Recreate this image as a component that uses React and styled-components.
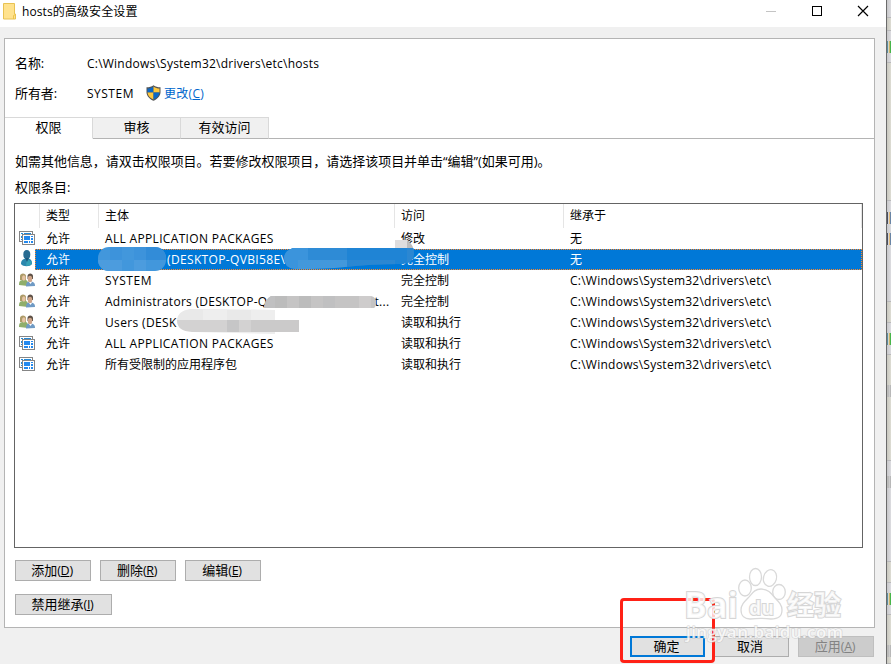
import styled, { createGlobalStyle, css } from "styled-components";

const GlobalStyle = createGlobalStyle`
  * {
    box-sizing: border-box;
  }

  body {
    margin: 0;
    overflow: hidden;
    background: #dbdad2;
    color: #000;
    font-family: "Open Sans", "Noto Sans CJK SC", sans-serif;
    font-size: 12px;
  }
`;

const Screen = styled.div`
  display: flex;
  width: 891px;
  height: 664px;
  overflow: hidden;
`;

// Dialog window
const Dialog = styled.div`
  position: relative;
  flex: none;
  display: flex;
  flex-direction: column;
  width: 887px;
  height: 664px;
  background: #f0f0f0;
  border-right: 1px solid #6b6b6b;
`;

const TitleBar = styled.header`
  display: flex;
  align-items: center;
  height: 27px;
  padding: 0 17px 5px 3px;
  background: #fff;
`;

const TitleText = styled.h1`
  flex: 1;
  margin: 1px 0 0 6px;
  font-size: 12px;
  font-weight: 400;
  line-height: 22px;
  letter-spacing: 0.1px;
`;

const WindowControls = styled.div`
  display: flex;
  gap: 34px;
`;

const Panel = styled.section`
  display: flex;
  flex-direction: column;
  width: 871px;
  height: 590px;
  margin: 11px 0 0 4px;
  background: #fff;
  border: 1px solid #b4b4b4;
`;

const Text = styled.span`
  white-space: pre;
  letter-spacing: ${({ $track }) => $track || 0}px;
`;

const Info = styled.dl`
  display: grid;
  grid-template-columns: 72px 1fr;
  grid-auto-rows: 30px;
  align-items: center;
  height: 78px;
  margin: 0;
  padding: 9px 0 0 10px;
`;

const Label = styled.dt`
  padding-bottom: 2px;
  font-size: 13px;
  letter-spacing: -0.1px;
`;

const Value = styled.dd`
  display: flex;
  align-items: center;
  margin: 0;
`;

const ChangeLink = styled.a`
  margin-left: 3px;
  color: #0066cc;
  letter-spacing: 0.3px;
`;

// Tabs
const TabBar = styled.nav`
  display: flex;
  height: 22px;
`;

const Tab = styled.div`
  display: flex;
  align-items: center;
  justify-content: center;
  width: 88px;
  padding-bottom: 3px;
  font-size: 13px;
  background: ${({ $active }) => ($active ? "#fff" : "#f0f0f0")};
  border: 1px solid #d9d9d9;
  border-left: 0;
  border-bottom-color: ${({ $active }) => ($active ? "#fff" : "#b4b4b4")};
`;

const TabFill = styled.div`
  flex: 1;
  border-bottom: 1px solid #b4b4b4;
`;

const Intro = styled.div`
  padding: 9px 0 1px 10px;
  font-size: 13px;
  line-height: 26px;
  letter-spacing: -0.03px;

  p {
    margin: 0;
  }
`;

// Permission entries
const Table = styled.div`
  position: relative;
  flex: none;
  width: 849px;
  height: 345px;
  margin: 2px 0 0 9px;
  border: 1px solid #646464;
`;

const columns = css`
  display: grid;
  grid-template-columns: 25px 59px 296px 169px 1fr;
`;

const HeadRow = styled.div`
  ${columns}
  height: 24px;
`;

const HeadCell = styled.div`
  padding-left: 6px;
  line-height: 23px;
  border-right: 1px solid #e5e5e5;
`;

const Row = styled.div`
  ${columns}
  position: relative;
  height: 21px;
  color: ${({ $selected }) => ($selected ? "#fff" : "#000")};
  background: ${({ $selected }) =>
    $selected ? "linear-gradient(90deg, #fff 20px, #0078d7 20px)" : "none"};

  ${({ $selected }) =>
    $selected &&
    css`
      &::after {
        content: "";
        position: absolute;
        inset: 0 0 0 20px;
        border: 1px dotted #ff8728;
      }
    `}
`;

const Cell = styled.div`
  padding-left: 6px;
  line-height: 22px;
  height: 21px;
  white-space: pre;
  letter-spacing: ${({ $track }) => $track || 0}px;
`;

const IconCell = styled.div`
  padding: ${({ $top }) => $top}px 0 0 4px;
  line-height: 0;
`;

const Gap = styled.span`
  display: inline-block;
  width: ${({ $width }) => $width}px;
`;

const SmudgeLayer = styled.svg`
  position: absolute;
  left: -1px;
  top: -1px;
`;

// Buttons
const ButtonRow = styled.div`
  display: flex;
  gap: 9px;
  padding: ${({ $top }) => $top}px 0 0 10px;
`;

const Button = styled.button`
  width: ${({ $width }) => $width || 76}px;
  height: 21px;
  padding: 0 2px 1px 0;
  color: ${({ disabled }) => (disabled ? "#838383" : "#000")};
  background: ${({ disabled }) => (disabled ? "#ccc" : "#e1e1e1")};
  border: 1px solid ${({ disabled }) => (disabled ? "#bfbfbf" : "#adadad")};
  font-family: inherit;
  font-size: 13px;
  line-height: 17px;

  ${({ $primary }) =>
    $primary &&
    css`
      width: 75px;
      margin-right: -1px;
      border: 2px solid #0078d7;
      line-height: 15px;
    `}

  small {
    font-size: 12.5px;
    letter-spacing: -0.3px;
  }
`;

const Footer = styled.footer`
  display: flex;
  justify-content: flex-end;
  gap: 9px;
  padding: 8px 12px 0 0;
`;

const Highlight = styled.div`
  position: absolute;
  left: 620px;
  top: 598px;
  width: 95px;
  height: 65px;
  border: 3px solid #ff2116;
  border-radius: 4px;
`;

const WatermarkLayer = styled.svg`
  position: absolute;
  left: 675px;
  top: 562px;
  font-family: "Open Sans", "Noto Sans CJK SC", sans-serif;
`;

// Page visible behind the dialog
const Behind = styled.div`
  flex: none;
  display: flex;
  flex-direction: column;
  width: 4px;
`;

const Band = styled.div`
  flex: none;
  height: ${({ $height }) => $height}px;
  overflow: hidden;
  padding-top: ${({ $top }) => $top || 0}px;
  background: linear-gradient(
    90deg,
    ${({ $grey }) => ($grey ? "#c8c8ca, #dcdce0" : "#c9c8c0, #dddcd3")}
  );
  border-bottom: 1px solid #b9b9bb;
`;

const Mark = styled.div`
  width: 4px;
  height: 12px;
  background: linear-gradient(
    90deg,
    ${({ $dim }) =>
      $dim
        ? "#bcbcba 1px, #bbb 1px 2px, #ccc 2px 3px, #b8b8b8 3px"
        : "#5c8fa0 1px, #d5d5c8 1px 2px, #c8b468 2px 3px, #48b54a 3px"}
  );
`;

const InkMark = styled.div`
  width: 4px;
  height: 12px;
  margin-bottom: 9px;
  background: linear-gradient(90deg, #4a4f60 1px, #d5d5d5 1px 2px, #e0b878 2px 3px, #6a85a5 3px);
`;

const FolderIcon = () => (
  <svg width="13" height="17" viewBox="0 0 13 17">
    <path d="M.5.5h11v10.500h1v5H.5z" fill="#ffe28d" stroke="#e8c252" />
    <path d="M10.500 16v-3.500l2-1" fill="none" stroke="#edc349" />
  </svg>
);

const ShieldIcon = () => (
  <svg width="15" height="16" viewBox="0 0 15 16">
    <path
      d="M7.5.2C5.5 1.700 3.500 2.200.5 2.200v5.300C.8 11.500 4 14.200 7.500 15.800 11 14.200 14.200 11.500 14.500 7.500V2.200C11.500 2.200 9.500 1.700 7.500.200z"
      fill="#555"
    />
    <path d="M7.500 1.500v6h-6v-4c2.300 0 4-.5 6-2z" fill="#0b68c7" />
    <path d="M7.500 1.500v6h6v-4c-2.300 0-4-.5-6-2z" fill="#ffc83d" />
    <path d="M1.500 7.500h6v7C4 13 1.800 10.800 1.500 7.500z" fill="#ffc83d" />
    <path d="M13.500 7.500h-6v7C11 13 13.200 10.800 13.500 7.500z" fill="#0b68c7" />
  </svg>
);

const PackageIcon = () => (
  <svg width="17" height="16" viewBox="0 0 17 16">
    <rect x="0.500" y="0.500" width="13" height="10" fill="#fff" stroke="#858585" />
    <path d="M2 2h2v1H2zM5 2h7v1H5zM2 5h1v2H2zM2 8h1v1H2z" fill="#2389d8" />
    <rect x="3.500" y="3.500" width="12" height="10" fill="#fff" stroke="#858585" />
    <path d="M5 5h6v4H5zM12 5h2v1h-2zM12 7h2v2h-2zM5 10h4v2H5zM10 10h1v2h-1zM12 10h2v2h-2z" fill="#2389ee" />
  </svg>
);

const UserIcon = () => (
  <svg width="17" height="17" viewBox="0 0 17 17">
    <path d="M2 14c0-4 2-5 5-5.500h2c3 .5 4 2 4 5.500-2 3-9 3-11 0z" fill="#2b87ad" />
    <path d="M8 9l5 3-1 3-5 1z" fill="#35a1b5" />
    <ellipse cx="7.800" cy="4.500" rx="3.500" ry="4.500" fill="#286b91" />
    <path d="M6 8l2 4 2-4z" fill="#1c587c" />
  </svg>
);

const GroupIcon = () => (
  <svg width="17" height="15" viewBox="0 0 17 15">
    <path d="M0 12c0-4 1-5 5-5s4 1 4 6z" fill="#8fae6b" />
    <path d="M1 7V3c0-3.500 6-3.500 6 0v4z" fill="#ad9b68" />
    <ellipse cx="4.800" cy="5" rx="1.800" ry="2.800" fill="#e6c4a4" />
    <path d="M7 13.500c0-4 1-5 4-5s5 1 5 4.500z" fill="#6f9ac4" />
    <path d="M8.500 6V3c0-3.500 5.500-3.500 5.500 0v3z" fill="#5e5147" />
    <ellipse cx="11" cy="6" rx="2.200" ry="3.200" fill="#cfa58a" />
    <path d="M10 9l1.500 2L13 9z" fill="#fff" />
  </svg>
);

const icons = { package: PackageIcon, user: UserIcon, group: GroupIcon };

const inheritedPath = "C:\\Windows\\System32\\drivers\\etc\\";

const entries = [
  { icon: "package", name: "ALL APPLICATION PACKAGES", track: 0.33, access: "修改", from: "无" },
  { icon: "user", gap: 62, name: "(DESKTOP-QVBI58E\\", track: 0.35, access: "完全控制", from: "无", selected: true },
  { icon: "group", name: "SYSTEM", track: 0.5, access: "完全控制", from: inheritedPath },
  { icon: "group", name: "Administrators (DESKTOP-Q", tail: "t...", track: 0.28, access: "完全控制", from: inheritedPath },
  { icon: "group", name: "Users (DESK", track: 0.35, access: "读取和执行", from: inheritedPath },
  { icon: "package", name: "ALL APPLICATION PACKAGES", track: 0.33, access: "读取和执行", from: inheritedPath },
  { icon: "package", name: "所有受限制的应用程序包", access: "读取和执行", from: inheritedPath },
];

const EntryRow = ({ entry }) => {
  const Icon = icons[entry.icon];
  return (
    <Row $selected={entry.selected}>
      <IconCell $top={entry.icon === "user" ? 1 : 3}>
        <Icon />
      </IconCell>
      <Cell>允许</Cell>
      <Cell $track={entry.track}>
        {entry.gap && <Gap $width={entry.gap} />}
        {entry.name}
        {entry.tail && <Gap $width={107} />}
        {entry.tail}
      </Cell>
      <Cell>{entry.access}</Cell>
      <Cell $track={0.25}>{entry.from}</Cell>
    </Row>
  );
};

// Brush strokes that hide the account names
const Smudges = () => (
  <SmudgeLayer width="849" height="345" viewBox="14 203 849 345">
    <defs>
      <clipPath id="blob-a">
        <rect x="98" y="247" width="68" height="24" rx="11" />
      </clipPath>
      <clipPath id="blob-b">
        <path d="M293 248H395V240h12q7 5 7 13 0 10-11 11-33 0-58 3-20 2-50 2-11-1-11-11 0-7 9-10z" />
      </clipPath>
      <clipPath id="blob-c">
        <path d="M271 296h100q5 1 5 6t-2 6H264q1-9 7-12z" />
      </clipPath>
      <clipPath id="blob-d">
        <path d="M190 309l85 1v10h24v12h-24v2l-83-2q-15-1-15-11t13-12z" />
      </clipPath>
    </defs>
    <g clipPath="url(#blob-a)">
      <path d="M98 247h70v26H98z" fill="#4297dc" />
      <path d="M110 247h12v13h-12zM134 247h12v13h-12z" fill="#3d93db" />
      <path d="M98 260h24v13H98zM134 260h12v13h-12z" fill="#4c9cde" />
      <path d="M146 247h22v13h-22z" fill="#328cd8" />
    </g>
    <g clipPath="url(#blob-b)">
      <path d="M284 248h130v22H284z" fill="#1f84d5" />
      <path d="M284 248h24v22h-24z" fill="#3b94dc" />
      <path d="M308 248h39v12h-39z" fill="#2e8bd6" />
      <path d="M298 260h49v10h-49z" fill="#4398db" />
      <path d="M347 260h48v10h-48zM407 248h8v18h-8z" fill="#2b87d2" />
      <path d="M395 240h12v8h-12z" fill="#deddde" />
      <path d="M407 240h8v8h-8z" fill="#bcbcbd" />
    </g>
    <g clipPath="url(#blob-c)">
      <path d="M264 296h113v12H264z" fill="#c5c4c4" />
      <path d="M275 296h12v12h-12zM299 296h12v12h-12z" fill="#bcbcbc" />
      <path d="M264 296h11v12h-11zM323 296h12v12h-12z" fill="#c0c0c1" />
      <path d="M359 296h12v12h-12z" fill="#cecccc" />
    </g>
    <g clipPath="url(#blob-d)">
      <path d="M177 309h98v11h-98z" fill="#e9e9e9" />
      <path d="M203 309h24v11h-24zM251 309h24v11h-24z" fill="#eee" />
      <path d="M177 320h122v12H177z" fill="#d3d2d2" />
      <path d="M227 320h12v12h-12z" fill="#c6c6c7" />
      <path d="M251 320h48v12h-48z" fill="#cbcaca" />
      <path d="M177 332h98v3h-98z" fill="#ededed" />
    </g>
  </SmudgeLayer>
);

const Watermark = () => (
  <WatermarkLayer width="175" height="90" viewBox="0 0 175 90">
    <g fill="#fff" fillOpacity="0.750" stroke="#d9d9d9" strokeWidth="1.300">
      <ellipse cx="70" cy="26" rx="6.300" ry="8" />
      <ellipse cx="80.500" cy="15" rx="6" ry="8.500" />
      <ellipse cx="95" cy="16" rx="6.500" ry="8.500" transform="rotate(15 95 16)" />
      <ellipse cx="104" cy="30" rx="6.300" ry="7.500" />
      <path d="M86 27c-7 0-9 5-13 9-4 4-7 7-7 12 0 6 4 9 9 9 8-1 14-1 21 0 7 0 11-2 11-9 0-5-3-8-7-12-4-5-7-9-14-9z" />
    </g>
    <g fill="#fff" fillOpacity="0.800" stroke="#d6d6d6" strokeWidth="2" paintOrder="stroke" fontWeight="700">
      <text x="9" y="56" fontSize="35" textLength="54" lengthAdjust="spacingAndGlyphs">Bai</text>
      <text x="74" y="53" fontSize="20" textLength="25" lengthAdjust="spacingAndGlyphs">du</text>
      <text x="112" y="53" fontSize="27" textLength="54" lengthAdjust="spacingAndGlyphs">经验</text>
    </g>
    <text
      x="11"
      y="76"
      fontSize="17"
      fontWeight="600"
      fill="#fff"
      fillOpacity="0.800"
      stroke="#bebebe"
      strokeOpacity="0.500"
      strokeWidth="1.500"
      paintOrder="stroke"
      textLength="157"
    >
      jingyan.baidu.com
    </text>
  </WatermarkLayer>
);

const App = () => {
  return (
    <Screen>
      <GlobalStyle />
      <Dialog>
        <TitleBar>
          <FolderIcon />
          <TitleText>hosts的高级安全设置</TitleText>
          <WindowControls>
            <svg width="12" height="12" stroke="#c4c4c4">
              <path d="M1 6.500h10" />
            </svg>
            <svg width="12" height="12" fill="none" stroke="#000">
              <rect x="1.500" y="1.500" width="9" height="9" />
            </svg>
            <svg width="12" height="12" stroke="#000" strokeWidth="1.200">
              <path d="M1 1l10 10M11 1L1 11" />
            </svg>
          </WindowControls>
        </TitleBar>

        <Panel>
          <Info>
            <Label>名称:</Label>
            <Value>
              <Text $track={0.23}>C:\Windows\System32\drivers\etc\hosts</Text>
            </Value>
            <Label>所有者:</Label>
            <Value>
              <Text $track={0.5}>SYSTEM</Text>
              <Gap $width={12} />
              <ShieldIcon />
              <ChangeLink>
                更改(<u>C</u>)
              </ChangeLink>
            </Value>
          </Info>

          <TabBar>
            <Tab $active>权限</Tab>
            <Tab>审核</Tab>
            <Tab>有效访问</Tab>
            <TabFill />
          </TabBar>

          <Intro>
            <p>如需其他信息，请双击权限项目。若要修改权限项目，请选择该项目并单击“编辑”(如果可用)。</p>
            <p>权限条目:</p>
          </Intro>

          <Table>
            <HeadRow>
              <HeadCell />
              <HeadCell>类型</HeadCell>
              <HeadCell>主体</HeadCell>
              <HeadCell>访问</HeadCell>
              <HeadCell>继承于</HeadCell>
            </HeadRow>
            {entries.map((entry, index) => (
              <EntryRow key={index} entry={entry} />
            ))}
            <Smudges />
          </Table>

          <ButtonRow $top={12}>
            <Button>添加<small>(<u>D</u>)</small></Button>
            <Button>删除<small>(<u>R</u>)</small></Button>
            <Button>编辑<small>(<u>E</u>)</small></Button>
          </ButtonRow>
          <ButtonRow $top={13}>
            <Button $width={97}>禁用继承<small>(<u>I</u>)</small></Button>
          </ButtonRow>
        </Panel>

        <Footer>
          <Button $primary>确定</Button>
          <Button>取消</Button>
          <Button disabled>应用<small>(<u>A</u>)</small></Button>
        </Footer>
        <Highlight />
        <Watermark />
      </Dialog>

      <Behind>
        <Band $height={18} $grey />
        <Band $height={13} />
        <Band $height={32} $grey $top={10}>
          <Mark />
        </Band>
        <Band $height={138} />
        <Band $height={101} $grey $top={11}>
          <InkMark />
          <InkMark />
        </Band>
        <Band $height={21} />
        <Band $height={32} $grey $top={10}>
          <Mark />
        </Band>
        <Band $height={106} $top={30}>
          <Mark $dim />
        </Band>
        <Band $height={101} $grey $top={15}>
          <Mark $dim />
        </Band>
        <Band $height={21} />
        <Band $height={32} $grey $top={10}>
          <Mark />
        </Band>
        <Band $height={49} $top={30}>
          <Mark $dim />
        </Band>
      </Behind>
    </Screen>
  );
};

export default App;
